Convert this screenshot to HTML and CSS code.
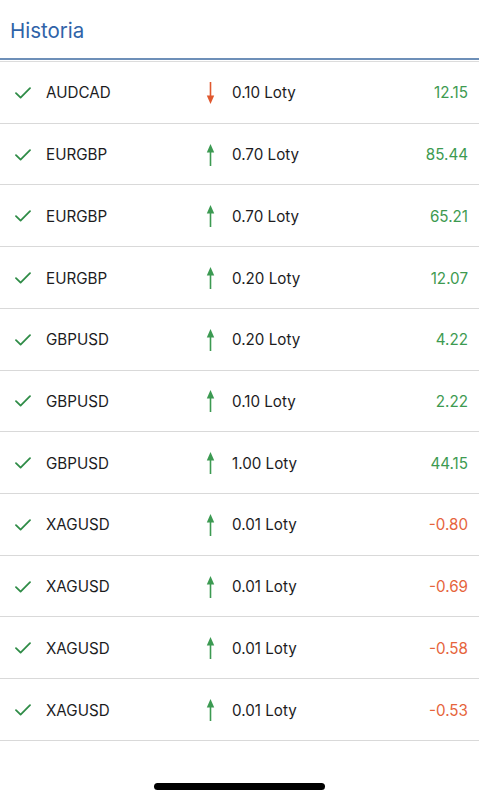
FILE: index.html
```html
<!DOCTYPE html>
<html lang="pl">
<head>
<meta charset="utf-8">
<title>Historia</title>
<link rel="stylesheet" href="styles.css">
</head>
<body>
<div class="page">
  <header class="header">
    <h1 class="title">Historia</h1>
  </header>
  <div class="header-rule"></div>
  <ul class="list">
    <li class="row"><svg class="check" viewBox="0 0 16 12"><path d="M1 6.2 L5.6 10.6 L15 1.2"/></svg><span class="sym">AUDCAD</span><svg class="arrow down" viewBox="0 0 9 22"><line x1="4.5" y1="0" x2="4.5" y2="15"/><polygon points="0.8,13.5 8.2,13.5 4.5,22"/></svg><span class="lots">0.10 Loty</span><span class="val pos">12.15</span></li>
    <li class="row"><svg class="check" viewBox="0 0 16 12"><path d="M1 6.2 L5.6 10.6 L15 1.2"/></svg><span class="sym">EURGBP</span><svg class="arrow up" viewBox="0 0 9 22"><line x1="4.5" y1="7" x2="4.5" y2="22"/><polygon points="0.8,8.5 8.2,8.5 4.5,0"/></svg><span class="lots">0.70 Loty</span><span class="val pos">85.44</span></li>
    <li class="row"><svg class="check" viewBox="0 0 16 12"><path d="M1 6.2 L5.6 10.6 L15 1.2"/></svg><span class="sym">EURGBP</span><svg class="arrow up" viewBox="0 0 9 22"><line x1="4.5" y1="7" x2="4.5" y2="22"/><polygon points="0.8,8.5 8.2,8.5 4.5,0"/></svg><span class="lots">0.70 Loty</span><span class="val pos">65.21</span></li>
    <li class="row"><svg class="check" viewBox="0 0 16 12"><path d="M1 6.2 L5.6 10.6 L15 1.2"/></svg><span class="sym">EURGBP</span><svg class="arrow up" viewBox="0 0 9 22"><line x1="4.5" y1="7" x2="4.5" y2="22"/><polygon points="0.8,8.5 8.2,8.5 4.5,0"/></svg><span class="lots">0.20 Loty</span><span class="val pos">12.07</span></li>
    <li class="row"><svg class="check" viewBox="0 0 16 12"><path d="M1 6.2 L5.6 10.6 L15 1.2"/></svg><span class="sym">GBPUSD</span><svg class="arrow up" viewBox="0 0 9 22"><line x1="4.5" y1="7" x2="4.5" y2="22"/><polygon points="0.8,8.5 8.2,8.5 4.5,0"/></svg><span class="lots">0.20 Loty</span><span class="val pos">4.22</span></li>
    <li class="row"><svg class="check" viewBox="0 0 16 12"><path d="M1 6.2 L5.6 10.6 L15 1.2"/></svg><span class="sym">GBPUSD</span><svg class="arrow up" viewBox="0 0 9 22"><line x1="4.5" y1="7" x2="4.5" y2="22"/><polygon points="0.8,8.5 8.2,8.5 4.5,0"/></svg><span class="lots">0.10 Loty</span><span class="val pos">2.22</span></li>
    <li class="row"><svg class="check" viewBox="0 0 16 12"><path d="M1 6.2 L5.6 10.6 L15 1.2"/></svg><span class="sym">GBPUSD</span><svg class="arrow up" viewBox="0 0 9 22"><line x1="4.5" y1="7" x2="4.5" y2="22"/><polygon points="0.8,8.5 8.2,8.5 4.5,0"/></svg><span class="lots">1.00 Loty</span><span class="val pos">44.15</span></li>
    <li class="row"><svg class="check" viewBox="0 0 16 12"><path d="M1 6.2 L5.6 10.6 L15 1.2"/></svg><span class="sym">XAGUSD</span><svg class="arrow up" viewBox="0 0 9 22"><line x1="4.5" y1="7" x2="4.5" y2="22"/><polygon points="0.8,8.5 8.2,8.5 4.5,0"/></svg><span class="lots">0.01 Loty</span><span class="val neg">-0.80</span></li>
    <li class="row"><svg class="check" viewBox="0 0 16 12"><path d="M1 6.2 L5.6 10.6 L15 1.2"/></svg><span class="sym">XAGUSD</span><svg class="arrow up" viewBox="0 0 9 22"><line x1="4.5" y1="7" x2="4.5" y2="22"/><polygon points="0.8,8.5 8.2,8.5 4.5,0"/></svg><span class="lots">0.01 Loty</span><span class="val neg">-0.69</span></li>
    <li class="row"><svg class="check" viewBox="0 0 16 12"><path d="M1 6.2 L5.6 10.6 L15 1.2"/></svg><span class="sym">XAGUSD</span><svg class="arrow up" viewBox="0 0 9 22"><line x1="4.5" y1="7" x2="4.5" y2="22"/><polygon points="0.8,8.5 8.2,8.5 4.5,0"/></svg><span class="lots">0.01 Loty</span><span class="val neg">-0.58</span></li>
    <li class="row"><svg class="check" viewBox="0 0 16 12"><path d="M1 6.2 L5.6 10.6 L15 1.2"/></svg><span class="sym">XAGUSD</span><svg class="arrow up" viewBox="0 0 9 22"><line x1="4.5" y1="7" x2="4.5" y2="22"/><polygon points="0.8,8.5 8.2,8.5 4.5,0"/></svg><span class="lots">0.01 Loty</span><span class="val neg">-0.53</span></li>
  </ul>
  <div class="home-indicator"></div>
</div>
</body>
</html>
```

FILE: styles.css
```css
* { box-sizing: border-box; }

html, body {
  margin: 0;
  padding: 0;
  background: #ffffff;
}

body {
  font-family: Inter, "Liberation Sans", Arial, sans-serif;
  color: #1c1c1e;
}

.page {
  width: 479px;
  height: 800px;
  display: flex;
  flex-direction: column;
  overflow: hidden;
}

.header {
  height: 58px;
  display: flex;
  align-items: center;
  padding: 2px 0 0 10px;
}

.title {
  margin: 0;
  font-size: 20.5px;
  font-weight: 400;
  color: #2f63a8;
}

.header-rule {
  height: 4px;
  border-top: 2px solid #6d8fb8;
  border-bottom: 1px solid #dcdcdc;
}

.list {
  list-style: none;
  margin: 0;
  padding: 0;
}

.row {
  height: 61.72px;
  display: grid;
  grid-template-columns: 31px 160px 9px 1fr auto;
  align-items: center;
  padding: 1px 11px 0 15px;
  border-bottom: 1px solid #d9d9d9;
  font-size: 15.2px;
}

.check {
  width: 16px;
  height: 12px;
  fill: none;
  stroke: #2f8c47;
  stroke-width: 1.8;
  stroke-linecap: round;
  stroke-linejoin: round;
}

.sym {
  color: #1c1c1e;
}

.arrow {
  width: 9px;
  height: 22px;
}

.arrow line {
  stroke-width: 1.6;
}

.arrow.up line { stroke: #3c9a52; }
.arrow.up polygon { fill: #3c9a52; }
.arrow.down line { stroke: #e0582f; }
.arrow.down polygon { fill: #e0582f; }

.lots {
  padding-left: 17px;
  color: #1c1c1e;
}

.val {
  text-align: right;
}

.val.pos { color: #3d9a50; }
.val.neg { color: #e6643c; }

.home-indicator {
  margin: auto auto 10px;
  width: 171px;
  height: 7px;
  border-radius: 4px;
  background: #000000;
}
```
